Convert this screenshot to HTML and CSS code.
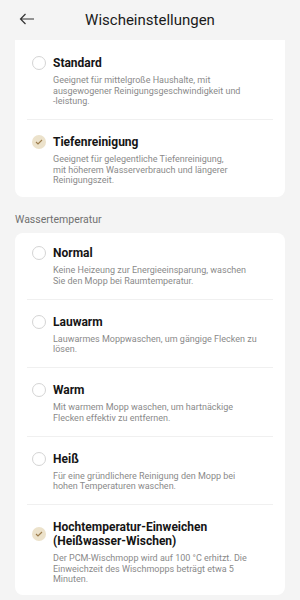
FILE: index.html
```html
<!DOCTYPE html>
<html lang="de">
<head>
<meta charset="utf-8">
<link rel="stylesheet" href="styles.css">
</head>
<body>
<div class="screen">
  <header class="topbar">
    <svg class="back" width="16" height="12" viewBox="0 0 16 12"><path d="M15 6H1.5M6.5 1L1.5 6l5 5" fill="none" stroke="#333" stroke-width="1.2"/></svg>
    <h1 class="title">Wischeinstellungen</h1>
  </header>

  <section class="card card-top">
    <div class="row">
      <span class="radio"></span>
      <div class="text">
        <div class="name">Standard</div>
        <div class="desc">Geeignet für mittelgroße Haushalte, mit<br>ausgewogener Reinigungsgeschwindigkeit und<br>-leistung.</div>
      </div>
    </div>
    <div class="row">
      <span class="radio checked"><svg width="8" height="6" viewBox="0 0 8 6"><path d="M1 3l2 2 4-4" fill="none" stroke="#9c7c4c" stroke-width="1.1"/></svg></span>
      <div class="text">
        <div class="name">Tiefenreinigung</div>
        <div class="desc">Geeignet für gelegentliche Tiefenreinigung,<br>mit höherem Wasserverbrauch und längerer<br>Reinigungszeit.</div>
      </div>
    </div>
  </section>

  <div class="label">Wassertemperatur</div>

  <section class="card">
    <div class="row">
      <span class="radio"></span>
      <div class="text">
        <div class="name">Normal</div>
        <div class="desc">Keine Heizeung zur Energieeinsparung, waschen Sie den Mopp bei Raumtemperatur.</div>
      </div>
    </div>
    <div class="row">
      <span class="radio"></span>
      <div class="text">
        <div class="name">Lauwarm</div>
        <div class="desc">Lauwarmes Moppwaschen, um gängige Flecken zu lösen.</div>
      </div>
    </div>
    <div class="row">
      <span class="radio"></span>
      <div class="text">
        <div class="name">Warm</div>
        <div class="desc">Mit warmem Mopp waschen, um hartnäckige Flecken effektiv zu entfernen.</div>
      </div>
    </div>
    <div class="row">
      <span class="radio"></span>
      <div class="text">
        <div class="name">Heiß</div>
        <div class="desc">Für eine gründlichere Reinigung den Mopp bei hohen Temperaturen waschen.</div>
      </div>
    </div>
    <div class="row">
      <span class="radio checked"><svg width="8" height="6" viewBox="0 0 8 6"><path d="M1 3l2 2 4-4" fill="none" stroke="#9c7c4c" stroke-width="1.1"/></svg></span>
      <div class="text">
        <div class="name">Hochtemperatur-Einweichen (Heißwasser-Wischen)</div>
        <div class="desc">Der PCM-Wischmopp wird auf 100 °C erhitzt. Die Einweichzeit des Wischmopps beträgt etwa 5 Minuten.</div>
      </div>
    </div>
  </section>
</div>
</body>
</html>
```

FILE: styles.css
```css
* { box-sizing: border-box; }
html, body { margin: 0; padding: 0; }
body {
  background: #f4f4f4;
  font-family: Roboto, "Noto Sans", "Liberation Sans", sans-serif;
  color: #111;
  width: 300px;
  height: 600px;
  overflow: hidden;
}
.screen { display: flex; flex-direction: column; padding: 0 15px; }
.topbar {
  height: 40px;
  display: flex;
  align-items: center;
  justify-content: center;
  position: relative;
}
.back { position: absolute; left: 4px; top: 13px; }
.title {
  margin: 0;
  font-size: 15px;
  font-weight: 400;
  color: #1a1a1a;
}
.card {
  background: #fff;
  border-radius: 8px;
  padding: 0 12px;
}
.card-top { border-radius: 0 0 8px 8px; }
.row {
  display: flex;
  align-items: center;
  padding: 15px 0 12.5px 5px;
  border-bottom: 1px solid #f0f0f0;
}
.row:last-child { border-bottom: none; padding-bottom: 10.5px; }
.card > .row:first-child { padding-top: 13px; }
.card-top > .row:first-child { padding-top: 16px; }
.card-top > .row:last-child { padding-bottom: 11.5px; }
.radio {
  flex: none;
  align-self: flex-start;
  width: 14px;
  height: 14px;
  border-radius: 50%;
  border: 1px solid #d4d4d4;
  display: flex;
  align-items: center;
  justify-content: center;
}
.radio.checked { border: none; background: #ece2cb; }
.text { flex: 1; padding: 0 15px 0 7px; }
.name {
  font-size: 12px;
  font-weight: 700;
  line-height: 14px;
  color: #151515;
}
.desc {
  margin-top: 5px;
  font-size: 9px;
  line-height: 10.5px;
  color: #8a8a8a;
}
.card > .row:last-child .radio { margin-top: 7px; }
.card-top > .row:last-child .radio { margin-top: 0; }
.label {
  font-size: 10.5px;
  line-height: 14px;
  color: #707070;
  margin: 16px 0 6px;
}
```
